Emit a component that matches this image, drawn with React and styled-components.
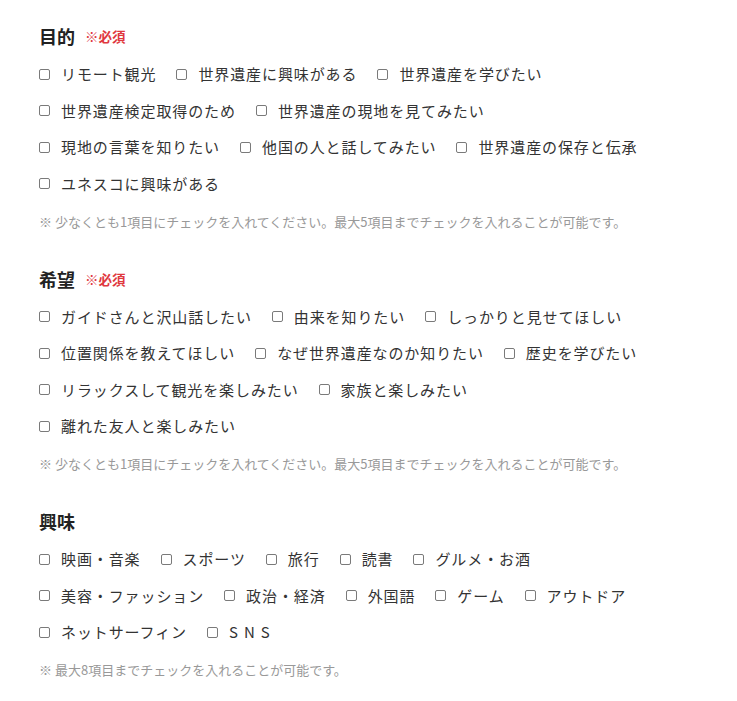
import styled, { createGlobalStyle } from 'styled-components'

const GlobalStyle = createGlobalStyle`
    body {
        margin: 0;
        background: #fff;
        font-family: 'Noto Sans CJK JP', 'Noto Sans', sans-serif;
        color: #333;
    }
`;

const Page = styled.div`
    padding: 23px 78px 0 39px;
    box-sizing: border-box;
    width: 737px;
`;

const Section = styled.section`
    margin-bottom: 34px;

    &:last-child {
        margin-bottom: 0;
    }
`;

const Heading = styled.h3`
    margin: 0;
    display: flex;
    align-items: center;
    gap: 10px;
    font-size: 18px;
    line-height: 26px;
    font-weight: 700;
    color: #222;
`;

const Required = styled.span`
    color: #e0383e;
    font-size: 13.5px;
    font-weight: 700;
`;

const Options = styled.div`
    display: flex;
    flex-wrap: wrap;
    column-gap: 20px;
    row-gap: 12.5px;
    margin-top: 13px;
`;

const Option = styled.label`
    display: flex;
    align-items: center;
    gap: 11px;
    font-size: 15px;
    line-height: 24px;
    letter-spacing: ${props => props.wide ? '6px' : '0.9px'};
    color: #333;
`;

const Box = styled.input.attrs({ type: 'checkbox' })`
    appearance: none;
    margin: 0;
    width: 11px;
    height: 11px;
    border: 1px solid #7a7a7a;
    border-radius: 2px;
    background: #fff;
    box-sizing: border-box;
    flex-shrink: 0;
`;

const Note = styled.p`
    margin: 16px 0 0 0;
    font-size: 13px;
    line-height: 20px;
    color: #999;
    white-space: nowrap;
`;

const sections = [
    {
        title: '目的',
        required: true,
        options: ['リモート観光', '世界遺産に興味がある', '世界遺産を学びたい', '世界遺産検定取得のため', '世界遺産の現地を見てみたい', '現地の言葉を知りたい', '他国の人と話してみたい', '世界遺産の保存と伝承', 'ユネスコに興味がある'],
        note: '※ 少なくとも1項目にチェックを入れてください。最大5項目までチェックを入れることが可能です。',
    },
    {
        title: '希望',
        required: true,
        options: ['ガイドさんと沢山話したい', '由来を知りたい', 'しっかりと見せてほしい', '位置関係を教えてほしい', 'なぜ世界遺産なのか知りたい', '歴史を学びたい', 'リラックスして観光を楽しみたい', '家族と楽しみたい', '離れた友人と楽しみたい'],
        note: '※ 少なくとも1項目にチェックを入れてください。最大5項目までチェックを入れることが可能です。',
    },
    {
        title: '興味',
        required: false,
        options: ['映画・音楽', 'スポーツ', '旅行', '読書', 'グルメ・お酒', '美容・ファッション', '政治・経済', '外国語', 'ゲーム', 'アウトドア', 'ネットサーフィン', 'SNS'],
        note: '※ 最大8項目までチェックを入れることが可能です。',
    },
]

export default function App() {
    return (
        <Page>
            <GlobalStyle />
            {sections.map(section => (
                <Section key={section.title}>
                    <Heading>
                        {section.title}
                        {section.required && <Required>※必須</Required>}
                    </Heading>
                    <Options>
                        {section.options.map(option => (
                            <Option key={option} wide={option === 'SNS'}>
                                <Box />
                                {option}
                            </Option>
                        ))}
                    </Options>
                    <Note>{section.note}</Note>
                </Section>
            ))}
        </Page>
    )
}
